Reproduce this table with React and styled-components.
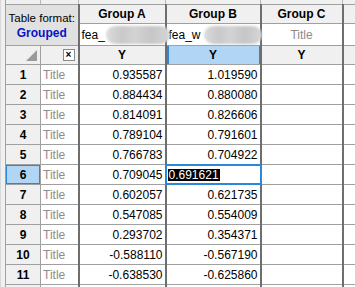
import React from 'react'
import styled, { createGlobalStyle } from 'styled-components'

const Global = createGlobalStyle`
  body {
    margin: 0;
    background: #f0f0f0;
    font-family: "Liberation Sans", Arial, sans-serif;
    font-size: 12px;
    color: #000;
  }
`

const Sheet = styled.div`
  width: 355px;
  height: 287px;
  overflow: hidden;
  padding-left: 4px;
  background: #f0f0f0;
  border-left: 1px solid #d8d8d8;
  box-sizing: border-box;
`

const Grid = styled.table`
  border-collapse: collapse;
  table-layout: fixed;
  width: 400px;
  background: #fff;
  border-left: 1px solid #a0a0a0;
`

const Cell = styled.td`
  height: ${p => p.$h || 19}px;
  padding: 0 2px;
  border-top: 1px solid #a0a0a0;
  border-bottom: 1px solid #a0a0a0;
  border-right: ${p => (p.$thick ? '2px solid #6e6e6e' : '1px solid #a0a0a0')};
  white-space: nowrap;
  overflow: ${p => (p.$spill ? 'visible' : 'hidden')};
  text-align: ${p => p.$align || 'right'};
  background: ${p => p.$bg || '#fff'};
  color: ${p => p.$color || '#000'};
  font-weight: ${p => (p.$bold ? 700 : 400)};
  line-height: 1;
  vertical-align: middle;
  box-sizing: border-box;
  position: relative;
`

const Strip = styled.td`
  height: 4px;
  padding: 0;
  background: #f0f0f0;
  border-right: 1px solid #b8b8b8;
  border-bottom: 1px solid #a0a0a0;
`

const FormatCell = styled.td`
  background: #e1e1e1;
  text-align: center;
  border-right: 2px solid #6e6e6e;
  border-bottom: 1px solid #a0a0a0;
  padding: 2px 0 0;
  line-height: 15px;
  font-size: 11.5px;
`

const FormatName = styled.div`
  color: #0a12c8;
  font-weight: 700;
  font-size: 12px;
`

const Blur = styled.span`
  position: absolute;
  top: 2px;
  left: ${p => p.$left}px;
  width: ${p => p.$w}px;
  height: 18px;
  border-radius: 9px;
  background: linear-gradient(90deg, #dcdcdc, #c9c9c9 25%, #d3d3d3 45%, #c6c6c6 70%, #d6d6d6);
  filter: blur(0.8px);
  z-index: 2;
`

const Corner = styled.span`
  position: absolute;
  right: 3px;
  bottom: 3px;
  width: 0;
  height: 0;
  border-left: 11px solid transparent;
  border-bottom: 11px solid #9a9a9a;
`

const CloseBox = styled.span`
  position: absolute;
  right: 3px;
  top: 3px;
  width: 10px;
  height: 10px;
  border: 1px solid #8a8a8a;
  background: #fff;
  font-size: 10px;
  font-weight: 700;
  line-height: 9px;
  text-align: center;
`

const Selected = styled.span`
  position: absolute;
  inset: -1px -2px -1px -2px;
  border: 2px solid #2b87d8;
  display: flex;
  align-items: center;
  padding-left: 1px;
  z-index: 3;
`

const SelText = styled.span`
  background: #000;
  color: #fff;
  padding: 0 1px;
`

const rows = [
  ['0.935587', '1.019590'],
  ['0.884434', '0.880080'],
  ['0.814091', '0.826606'],
  ['0.789104', '0.791601'],
  ['0.766783', '0.704922'],
  ['0.709045', '0.691621'],
  ['0.602057', '0.621735'],
  ['0.547085', '0.554009'],
  ['0.293702', '0.354371'],
  ['-0.588110', '-0.567190'],
  ['-0.638530', '-0.625860'],
  ['', '']
]

const HEAD = '#f0f0f0'
const BLUE = '#b1d5f4'
const GRAY = '#8c8c8c'

export default function App() {
  return (
    <Sheet>
      <Global />
      <Grid>
        <colgroup>
          <col style={{ width: 35 }} />
          <col style={{ width: 38 }} />
          <col style={{ width: 87 }} />
          <col style={{ width: 95 }} />
          <col style={{ width: 82 }} />
          <col style={{ width: 63 }} />
        </colgroup>
        <tbody>
          <tr>
            <Strip />
            <Strip />
            <Strip />
            <Strip />
            <Strip />
            <Strip />
          </tr>
          <tr>
            <FormatCell colSpan={2} rowSpan={2}>
              Table format:
              <FormatName>Grouped</FormatName>
            </FormatCell>
            <Cell $h={19} $align="center" $bold $bg={HEAD} $thick>Group A</Cell>
            <Cell $h={19} $align="center" $bold $bg={HEAD} $thick>Group B</Cell>
            <Cell $h={19} $align="center" $bold $bg={HEAD} $thick>Group C</Cell>
            <Cell $h={19} $bg={HEAD} />
          </tr>
          <tr>
            <Cell $h={22} $align="left" $thick $spill>
              fea_
              <Blur $left={26} $w={64} />
            </Cell>
            <Cell $h={22} $align="left" $thick $spill>
              fea_w
              <Blur $left={37} $w={58} />
            </Cell>
            <Cell $h={22} $align="center" $color={GRAY} $thick>Title</Cell>
            <Cell $h={22} />
          </tr>
          <tr>
            <Cell $h={19} $bg={HEAD}><Corner /></Cell>
            <Cell $h={19} $bg={HEAD} $thick><CloseBox>×</CloseBox></Cell>
            <Cell $h={19} $align="center" $bold $bg={HEAD} $thick>Y</Cell>
            <Cell $h={19} $align="center" $bold $bg={BLUE} $thick style={{ boxShadow: 'inset 2px 0 0 #2b87d8, inset -1px 0 0 #2b87d8' }}>Y</Cell>
            <Cell $h={19} $align="center" $bold $bg={HEAD} $thick>Y</Cell>
            <Cell $h={19} $bg={HEAD} />
          </tr>
          {rows.map(([a, b], i) => {
            const sel = i === 5
            return (
              <tr key={i}>
                <Cell
                  $h={20}
                  $align="center"
                  $bold
                  $bg={sel ? BLUE : HEAD}
                  style={sel ? { boxShadow: 'inset 0 0 0 1px #2b87d8' } : undefined}
                >
                  {i < 11 ? i + 1 : ''}
                </Cell>
                <Cell $h={20} $align="left" $color={GRAY} $thick>{i < 11 ? 'Title' : ''}</Cell>
                <Cell $h={20} $thick>{a}</Cell>
                <Cell $h={20} $thick $align={sel ? 'left' : 'right'} $spill={sel}>
                  {sel ? (
                    <Selected>
                      <SelText>{b}</SelText>
                    </Selected>
                  ) : (
                    b
                  )}
                </Cell>
                <Cell $h={20} $thick />
                <Cell $h={20} />
              </tr>
            )
          })}
        </tbody>
      </Grid>
    </Sheet>
  )
}
